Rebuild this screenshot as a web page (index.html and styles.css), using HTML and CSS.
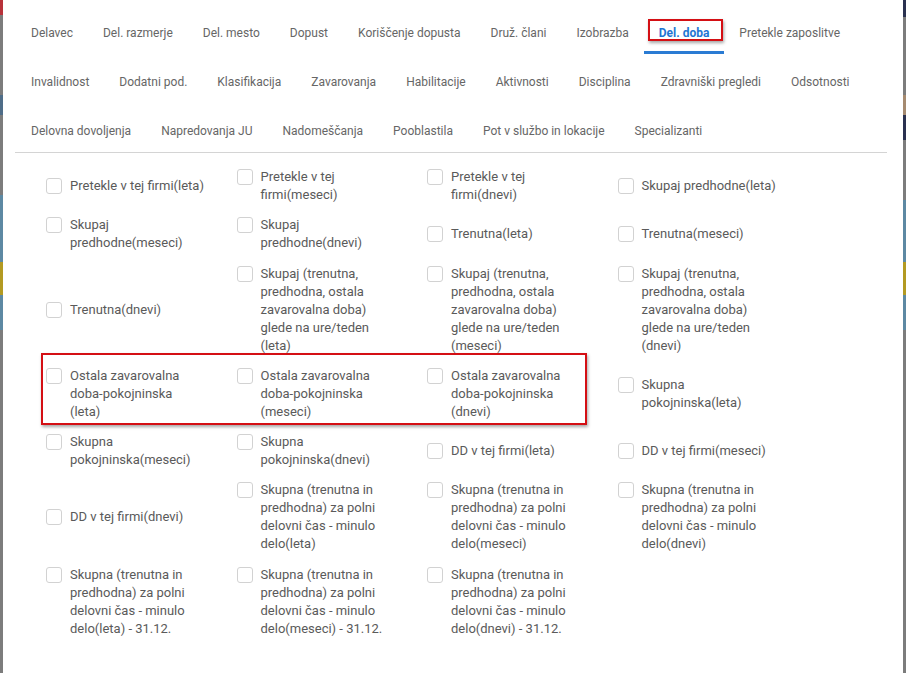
FILE: index.html
```html
<!DOCTYPE html>
<html>

<head>
  <meta name="viewport" content="width=device-width, initial-scale=1.0">
  <title>Del. doba</title>
  <link rel="stylesheet" href="styles.css">
</head>

<body>
  <div class="panel">
    <div class="content">
      <!-- Zavihki -->
      <div class="tabs">
        <div class="tab-row">
          <div class="tab">Delavec</div>
          <div class="tab">Del. razmerje</div>
          <div class="tab">Del. mesto</div>
          <div class="tab">Dopust</div>
          <div class="tab">Koriščenje dopusta</div>
          <div class="tab">Druž. člani</div>
          <div class="tab">Izobrazba</div>
          <div class="tab active">Del. doba<span class="mark mark-tab"></span></div>
          <div class="tab">Pretekle zaposlitve</div>
        </div>
        <div class="tab-row">
          <div class="tab">Invalidnost</div>
          <div class="tab">Dodatni pod.</div>
          <div class="tab">Klasifikacija</div>
          <div class="tab">Zavarovanja</div>
          <div class="tab">Habilitacije</div>
          <div class="tab">Aktivnosti</div>
          <div class="tab">Disciplina</div>
          <div class="tab">Zdravniški pregledi</div>
          <div class="tab">Odsotnosti</div>
        </div>
        <div class="tab-row">
          <div class="tab">Delovna dovoljenja</div>
          <div class="tab">Napredovanja JU</div>
          <div class="tab">Nadomeščanja</div>
          <div class="tab">Pooblastila</div>
          <div class="tab">Pot v službo in lokacije</div>
          <div class="tab">Specializanti</div>
        </div>
      </div>

      <!-- Izbira stolpcev -->
      <div class="fields">
        <label class="field"><input type="checkbox"><span>Pretekle v tej firmi(leta)</span></label>
        <label class="field"><input type="checkbox"><span>Pretekle v tej firmi(meseci)</span></label>
        <label class="field"><input type="checkbox"><span>Pretekle v tej firmi(dnevi)</span></label>
        <label class="field"><input type="checkbox"><span>Skupaj predhodne(leta)</span></label>

        <label class="field"><input type="checkbox"><span>Skupaj predhodne(meseci)</span></label>
        <label class="field"><input type="checkbox"><span>Skupaj predhodne(dnevi)</span></label>
        <label class="field"><input type="checkbox"><span>Trenutna(leta)</span></label>
        <label class="field"><input type="checkbox"><span>Trenutna(meseci)</span></label>

        <label class="field"><input type="checkbox"><span>Trenutna(dnevi)</span></label>
        <label class="field"><input type="checkbox"><span>Skupaj (trenutna, predhodna, ostala zavarovalna doba) glede na ure/teden (leta)</span></label>
        <label class="field"><input type="checkbox"><span>Skupaj (trenutna, predhodna, ostala zavarovalna doba) glede na ure/teden (meseci)</span></label>
        <label class="field"><input type="checkbox"><span>Skupaj (trenutna, predhodna, ostala zavarovalna doba) glede na ure/teden (dnevi)</span></label>

        <label class="field"><input type="checkbox"><span>Ostala zavarovalna doba-pokojninska<br>(leta)</span></label>
        <label class="field"><input type="checkbox"><span>Ostala zavarovalna doba-pokojninska (meseci)</span></label>
        <label class="field"><input type="checkbox"><span>Ostala zavarovalna doba-pokojninska (dnevi)</span></label>
        <label class="field"><input type="checkbox"><span>Skupna pokojninska(leta)</span></label>

        <label class="field"><input type="checkbox"><span>Skupna pokojninska(meseci)</span></label>
        <label class="field"><input type="checkbox"><span>Skupna pokojninska(dnevi)</span></label>
        <label class="field"><input type="checkbox"><span>DD v tej firmi(leta)</span></label>
        <label class="field"><input type="checkbox"><span>DD v tej firmi(meseci)</span></label>

        <label class="field"><input type="checkbox"><span>DD v tej firmi(dnevi)</span></label>
        <label class="field"><input type="checkbox"><span>Skupna (trenutna in predhodna) za polni delovni čas - minulo delo(leta)</span></label>
        <label class="field"><input type="checkbox"><span>Skupna (trenutna in predhodna) za polni delovni čas - minulo delo(meseci)</span></label>
        <label class="field"><input type="checkbox"><span>Skupna (trenutna in predhodna) za polni delovni čas - minulo delo(dnevi)</span></label>

        <label class="field"><input type="checkbox"><span>Skupna (trenutna in predhodna) za polni delovni čas - minulo delo(leta) - 31.12.</span></label>
        <label class="field"><input type="checkbox"><span>Skupna (trenutna in predhodna) za polni delovni čas - minulo delo(meseci) - 31.12.</span></label>
        <label class="field"><input type="checkbox"><span>Skupna (trenutna in predhodna) za polni delovni čas - minulo delo(dnevi) - 31.12.</span></label>

        <!-- oznaka okoli vrstice -->
        <div class="mark mark-row"></div>
      </div>
    </div>
  </div>
</body>

</html>
```

FILE: styles.css
```css
body {
  margin: 0;
  font-family: Roboto, "Liberation Sans", Arial, sans-serif;
  background:
    linear-gradient(to bottom, #b8323a 0 15px, #7c7c7c 15px 95px, #4f6d88 95px 115px, #7c7c7c 115px 195px, #5d89a3 195px 262px, #b39a22 262px 295px, #5d89a3 295px 330px, #7c7c7c 330px) left top / 3px 100% no-repeat,
    linear-gradient(to bottom, #2a3150 0 17px, #7c7c7c 17px 95px, #a58a70 95px 115px, #2a3150 115px 140px, #7c7c7c 140px 200px, #5d89a3 200px 262px, #b39a22 262px 295px, #5d89a3 295px 330px, #7c7c7c 330px) right top / 3px 100% no-repeat,
    #7c7c7c;
}

.panel {
  margin: 0 3px;
  min-height: 100vh;
  background-color: #ffffff;
}

.content {
  margin: 0 16px 0 12px;
}

/* Zavihki */
.tabs {
  display: flex;
  flex-direction: column;
  gap: 8px;
  padding-top: 13px;
  border-bottom: 1px solid #d4d4d4;
}

.tab-row {
  display: flex;
  padding-left: 1px;
}

.tab {
  position: relative;
  height: 41px;
  line-height: 41px;
  padding: 0 15px;
  font-size: 12px;
  color: #666666;
  white-space: nowrap;
}

.tab.active {
  color: #1f76d3;
  font-weight: bold;
  box-shadow: inset 0 -3px 0 #2a7bd3;
}

/* Polja */
.fields {
  position: relative;
  display: grid;
  grid-template-columns: repeat(4, 190.5px);
  row-gap: 12.3px;
  margin: 15px 0 0 31px;
}

.field {
  display: flex;
  align-items: flex-start;
  align-self: center;
  gap: 8px;
  font-size: 13px;
  line-height: 18px;
  color: #5a5a5a;
}

.field span {
  width: 137px;
}

.field input {
  -webkit-appearance: none;
  appearance: none;
  flex: none;
  width: 16px;
  height: 16px;
  margin: 1px 0 0;
  border: 1px solid #d2d2d2;
  border-radius: 3px;
  background-color: #ffffff;
}

/* Rdeče oznake */
.mark {
  position: absolute;
  border: 2px solid #d40f14;
  box-shadow: 1px 2px 3px rgba(0, 0, 0, 0.35);
  pointer-events: none;
}

.mark-tab {
  left: 4px;
  top: 6px;
  width: 71px;
  height: 18px;
}

.mark-row {
  left: -5px;
  top: 185px;
  width: 542px;
  height: 68px;
}
```
